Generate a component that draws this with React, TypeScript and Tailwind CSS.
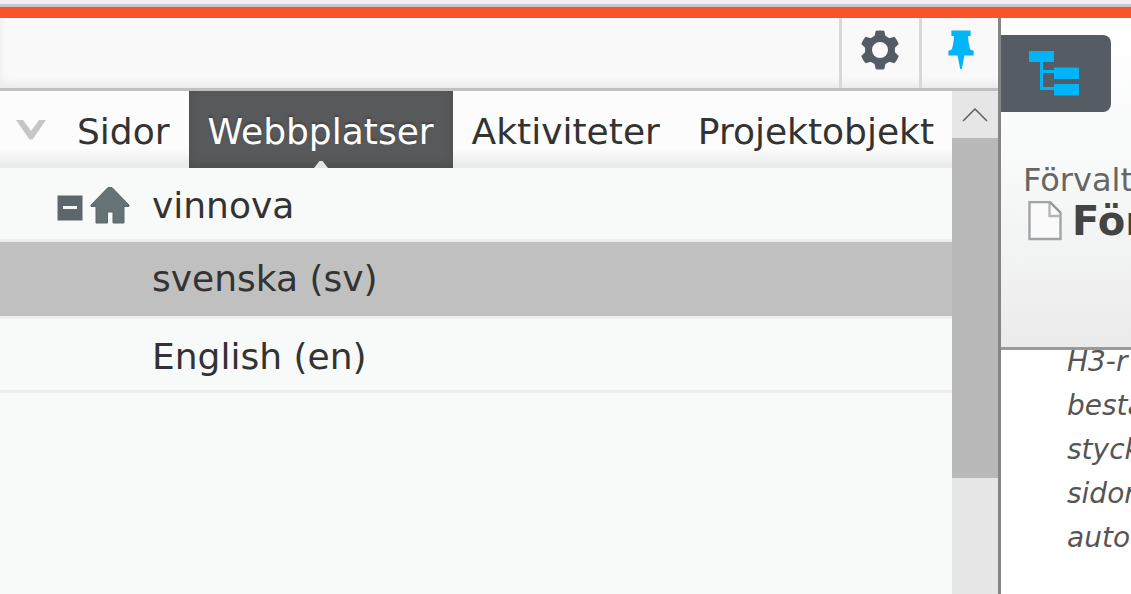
import React from 'react';
import clsx from 'clsx';

const TABS = ['Sidor', 'Webbplatser', 'Aktiviteter', 'Projektobjekt'];
const ACTIVE_TAB = 'Webbplatser';

const INTRO_LINES = ['H3-r', 'besta', 'styck', 'sidor', 'auto'];

const GearIcon = () => (
  <svg width="40" height="40" viewBox="0 0 40 40" aria-hidden="true">
    <g fill="#555b65">
      {[0, 60, 120].map((angle) => (
        <path
          key={angle}
          transform={`rotate(${angle} 20 20)`}
          d="M15.8 0.8 Q20 0 24.2 0.8 L26 8 H14 Z M15.8 39.2 Q20 40 24.2 39.2 L26 32 H14 Z"
        />
      ))}
    </g>
    <circle cx="20" cy="20" r="11.5" fill="none" stroke="#555b65" strokeWidth="7" />
  </svg>
);

const PinIcon = () => (
  <svg width="26" height="40" viewBox="0 0 26 40" fill="#00b4f8" aria-hidden="true">
    <path d="M3.4 0.5 H22.6 V6 H20 Q20.4 14 22 19 Q23 20.5 25.6 20.5 V25.6 H16.4 L13.8 39 H12.2 L9.6 25.6 H0.4 V20.5 Q3 20.5 4 19 Q5.6 14 6 6 H3.4 Z" />
  </svg>
);

const TreeIcon = () => (
  <svg width="50" height="45" viewBox="0 0 50 45" aria-hidden="true">
    <path d="M12.5 11 V37.5 H26 M12.5 20.5 H26" fill="none" stroke="#00b4f8" strokeWidth="3" />
    <path d="M0 0 H25 V11 H0 Z M25 16.5 H50 V28 H25 Z M25 33 H50 V44.5 H25 Z" fill="#00b4f8" />
  </svg>
);

const HomeIcon = () => (
  <svg width="40" height="38" viewBox="0 0 40 38" aria-hidden="true">
    <path
      d="M18 0.5 H22 L39 18 V19.5 H34 V36 H23 V25 H17.5 V36 H6 V19.5 H1 V18 Z"
      fill="#667276"
      stroke="#5a666a"
      strokeWidth="1"
    />
  </svg>
);

const CollapseIcon = () => (
  <svg width="26" height="26" viewBox="0 0 26 26" aria-hidden="true">
    <rect x="0.5" y="0.5" width="25" height="25" fill="#5d666c" />
    <rect x="6" y="11" width="14" height="3" fill="#f4f6f6" />
  </svg>
);

const PageIcon = () => (
  <svg width="34" height="40" viewBox="0 0 34 40" aria-hidden="true">
    <path d="M1.5 1 H22 L32.5 11.5 V38 H1.5 Z" fill="#fafafa" stroke="#a2a4a8" strokeWidth="2.4" />
    <path d="M21.5 1.5 V15 H32" fill="none" stroke="#b4b6b9" strokeWidth="2.4" />
    <path d="M22 1.5 L32 11.5" stroke="#8f9194" strokeWidth="1.4" />
  </svg>
);

const Toolbar = () => (
  <div className="flex h-[73px] border-b-3 border-[#c0c0c0] bg-[#f9f9f9] shadow-[inset_4px_-8px_8px_-4px_#e9e9e9]">
    <div className="flex-1" />
    <button
      type="button"
      aria-label="Inställningar"
      className="flex w-20 items-start justify-center border-l-3 border-[#d8d8d8] pt-3 pr-0.5"
    >
      <GearIcon />
    </button>
    <button
      type="button"
      aria-label="Fäst"
      className="flex w-[79px] items-start justify-center border-l-3 border-[#d8d8d8] pt-3 pl-0.5"
    >
      <PinIcon />
    </button>
  </div>
);

const Tabs = () => (
  <nav className="flex h-[77px] bg-linear-to-b from-[#fcfcfc] from-75% to-[#ececec] to-95%">
    <button type="button" aria-label="Visa fler" className="flex w-[58px] shrink-0 items-center pl-4">
      <svg width="30" height="20" viewBox="0 0 30 20" aria-hidden="true">
        <path d="M0 0 H7 L15 11 L23 0 H30 L16.5 19.5 H13.5 Z" fill="#c6c6c6" />
      </svg>
    </button>
    {TABS.map((tab) => (
      <a
        key={tab}
        href="#"
        className={clsx(
          'relative flex items-center px-[19px] pt-1 text-[36px] leading-[44px]',
          tab === ACTIVE_TAB
            ? 'bg-[#58595b] text-white shadow-[inset_0_-3px_8px_#4c4c4c] [text-shadow:0_-2px_2px_#444]'
            : 'text-[#333]'
        )}
      >
        {tab}
        {tab === ACTIVE_TAB && (
          <svg className="absolute bottom-0 left-1/2 -translate-x-1/2" width="14" height="7" viewBox="0 0 14 7">
            <path d="M0 7 L5.5 0 H8.5 L14 7 Z" fill="#e4e4e4" />
          </svg>
        )}
      </a>
    ))}
  </nav>
);

const SiteTree = () => (
  <ul className="text-[36px] leading-[44px] text-[#333]">
    <li className="flex h-[74px] items-center border-b-3 border-[#ededed] pt-1 pl-[57px]">
      <button type="button" aria-label="Fäll ihop" className="mt-1">
        <CollapseIcon />
      </button>
      <span className="ml-[7px]">
        <HomeIcon />
      </span>
      <a href="#" className="ml-[22px]">vinnova</a>
    </li>
    <li className="flex h-[77px] items-center border-b-3 border-[#ededed] bg-[#c0c0c0] pl-[152px]">
      <a href="#">svenska (sv)</a>
    </li>
    <li className="flex h-[74px] items-center border-b-3 border-[#ededed] pt-1 pl-[152px]">
      <a href="#">English (en)</a>
    </li>
  </ul>
);

const Scrollbar = () => (
  <div className="flex w-[46px] shrink-0 flex-col bg-[#e6e6e6]">
    <button type="button" aria-label="Rulla upp" className="flex h-[47px] items-center justify-center">
      <svg width="26" height="14" viewBox="0 0 26 14" aria-hidden="true">
        <path d="M1 13 L13 1 L25 13" fill="none" stroke="#606060" strokeWidth="1.5" />
      </svg>
    </button>
    <div className="h-[340px] bg-[#b9b9b9]" />
  </div>
);

const ContentPane = () => (
  <main className="flex w-[130px] shrink-0 flex-col overflow-hidden bg-white">
    <header className="h-[332px] shrink-0 border-b-3 border-[#999] bg-linear-to-b from-white via-[#f8faf9] via-45% to-[#ebebeb] pt-[17px]">
      <button
        type="button"
        aria-label="Visa struktur"
        className="flex h-[77px] w-[110px] items-center justify-center rounded-r-lg bg-[#555c64] pr-1"
      >
        <TreeIcon />
      </button>
      <div className="mt-12 whitespace-nowrap pl-[22px]">
        <p className="text-[32px] leading-10 text-[#666]">Förvalt</p>
        <h1 className="flex items-center text-[40px] leading-[42px] font-bold text-[#444]">
          <span className="mr-2.5 ml-[5px]">
            <PageIcon />
          </span>
          För
        </h1>
      </div>
    </header>
    {/* Body is scrolled, so its first line sits partly under the header */}
    <div className="overflow-hidden">
      <div className="-mt-2.5 pl-[66px] text-[28px] leading-[44px] text-[#555] italic">
        {INTRO_LINES.map((line) => (
          <p key={line} className="whitespace-nowrap">{line}</p>
        ))}
      </div>
    </div>
  </main>
);

const App: React.FC = () => {
  return (
    <div className="flex h-screen flex-col overflow-hidden font-['DejaVu_Sans',sans-serif]">
      <div className="h-[7px] shrink-0 border-b-3 border-[#c8c8c8] bg-[#f0f0f0]" />
      <div className="h-[11px] shrink-0 bg-[#fa522b]" />
      <div className="flex min-h-0 flex-1">
        <aside className="flex min-w-0 flex-1 flex-col border-r-3 border-[#858585]">
          <Toolbar />
          <div className="flex min-h-0 flex-1">
            <div className="min-w-0 flex-1 overflow-hidden bg-[#f8faf9]">
              <Tabs />
              <SiteTree />
            </div>
            <Scrollbar />
          </div>
        </aside>
        <ContentPane />
      </div>
    </div>
  );
};

export default App;
